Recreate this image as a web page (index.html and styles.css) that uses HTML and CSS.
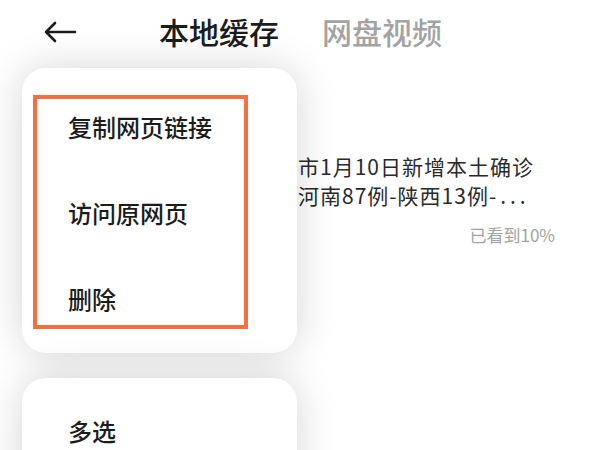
FILE: index.html
```html
<!DOCTYPE html>
<html lang="zh-CN">
<head>
    <meta charset="UTF-8">
    <meta name="viewport" content="width=device-width, initial-scale=1.0">
    <title>本地缓存</title>
    <link rel="stylesheet" href="styles.css">
</head>
<body>
    <div class="screen">
        <header class="top-bar">
            <button class="back-btn" aria-label="返回">
                <svg width="34" height="22" viewBox="0 0 34 22">
                    <path d="M32 11H3M12 2L3 11l9 9" fill="none" stroke="#1c1c1c" stroke-width="2.6" stroke-linecap="round" stroke-linejoin="round"/>
                </svg>
            </button>
            <nav class="tabs">
                <span class="tab active">本地缓存</span>
                <span class="tab">网盘视频</span>
            </nav>
        </header>

        <main class="cache-list">
            <div class="cache-item">
                <p class="item-title">市1月10日新增本土确诊<br>河南87例-陕西13例<span class="more">-...</span></p>
                <p class="item-progress">已看到10%</p>
            </div>
        </main>

        <!-- 长按弹出菜单 -->
        <div class="menu-card menu-main">
            <div class="highlight"></div>
            <div class="menu-item">复制网页链接</div>
            <div class="menu-item">访问原网页</div>
            <div class="menu-item">删除</div>
        </div>
        <div class="menu-card menu-extra">
            <div class="menu-item">多选</div>
        </div>
    </div>
</body>
</html>
```

FILE: styles.css
```css
:root {
    --text-color: #1c1c1c;
    --muted-color: #a3a3a3;
    --mark-color: #f5703f;
}

* {
    margin: 0;
    padding: 0;
    box-sizing: border-box;
    font-family: 'Noto Sans CJK SC', 'Noto Sans', sans-serif;
}

body {
    background: #ffffff;
    width: 600px;
    height: 450px;
    overflow: hidden;
}

.screen {
    position: relative;
    width: 600px;
    height: 450px;
    overflow: hidden;
}

.top-bar {
    display: flex;
    align-items: center;
    height: 62px;
    padding-left: 43px;
}

.back-btn {
    display: flex;
    background: none;
    border: none;
    margin-top: 1px;
}

.tabs {
    display: flex;
    gap: 43px;
    margin-left: 82px;
}

.tab {
    font-size: 30px;
    line-height: 40px;
    font-weight: 500;
    color: var(--muted-color);
}

.tab.active {
    color: var(--text-color);
}

.cache-list {
    padding: 90px 45px 0 298px;
}

.item-title {
    font-size: 21px;
    line-height: 29px;
    letter-spacing: 1px;
    color: #2a2a2a;
}

.more {
    letter-spacing: 4px;
}

.item-progress {
    margin-top: 13px;
    text-align: right;
    font-size: 17px;
    line-height: 24px;
    color: var(--muted-color);
}

.menu-card {
    position: absolute;
    left: 22px;
    width: 275px;
    background: #ffffff;
    border-radius: 24px;
    box-shadow: 0 0 40px rgba(0, 0, 0, 0.17);
}

.menu-main {
    top: 68px;
    height: 285px;
    padding-top: 15px;
}

.menu-extra {
    top: 378px;
    height: 200px;
    padding-top: 9px;
}

.menu-item {
    display: flex;
    align-items: center;
    height: 86px;
    padding-left: 46px;
    font-size: 24px;
    font-weight: 500;
    color: var(--text-color);
}

.highlight {
    position: absolute;
    left: 11px;
    top: 27px;
    width: 215px;
    height: 234px;
    border: 4px solid var(--mark-color);
}
```
